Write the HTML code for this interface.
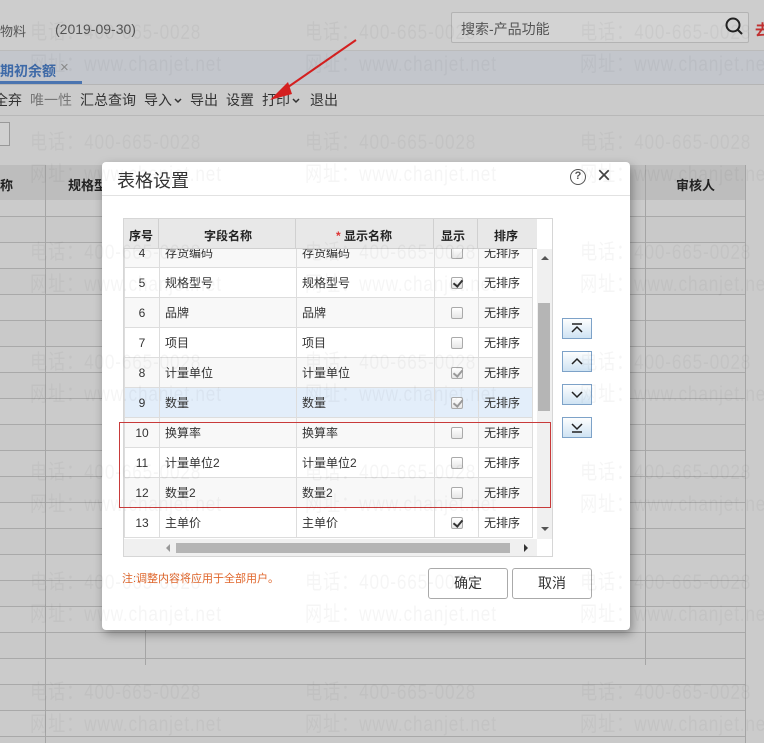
<!DOCTYPE html>
<html><head><meta charset="utf-8">
<style>
*{margin:0;padding:0;box-sizing:border-box}
body{width:764px;height:743px;overflow:hidden;position:relative;background:#cbcbcb;font-family:"Liberation Sans","Noto Sans CJK SC",sans-serif;font-size:13px;color:#222}
.a{position:absolute}
.t{white-space:nowrap}
.wm{position:absolute;font-family:"Liberation Sans","Noto Sans CJK SC",sans-serif;font-size:21px;color:rgba(0,0,0,0.04);white-space:nowrap;transform:scaleX(0.82);transform-origin:left top;letter-spacing:1px;pointer-events:none}
table.in{border-collapse:collapse;position:absolute;left:0;top:0}
table.in td{height:30px;border:1px solid #ddd;font-size:12px;color:#333}
.cb{display:inline-block;width:12px;height:12px;border:1px solid #aaa;border-radius:2px;background:linear-gradient(#fff,#e6e6e6);position:relative;vertical-align:middle}
.cb.on:after{content:"";position:absolute;left:3px;top:0px;width:4px;height:7px;border:solid #333;border-width:0 2px 2px 0;transform:rotate(40deg)}
.cb.dim.on:after{border-color:#999}
.sb{position:absolute;left:562px;width:30px;height:21px;border:1px solid #7da2c8;background:linear-gradient(#fdfefe,#cfe3f3);}
.btn{position:absolute;top:568px;width:80px;height:31px;border:1px solid #aaa;border-radius:3px;background:#fff;text-align:center;line-height:29px;font-size:14px;color:#333}
.chev{display:inline-block;vertical-align:middle;margin-left:2px}
</style></head><body>
<div class="a" style="left:0;top:0;width:764px;height:50px;background:#cdcdcd"></div>
<div class="a t" style="left:0;top:21px;font-size:13px;color:#555">物料</div>
<div class="a t" style="left:55px;top:21px;font-size:14px;color:#555">(2019-09-30)</div>
<div class="a" style="left:451px;top:12px;width:298px;height:31px;border:1px solid #b3b3b3;background:#d3d3d3;border-radius:2px"></div>
<div class="a t" style="left:461px;top:19px;font-size:14px;color:#555">搜索-产品功能</div>
<svg class="a" style="left:724px;top:16px" width="22" height="22"><circle cx="9" cy="9" r="6.5" fill="none" stroke="#222" stroke-width="2"/><line x1="14" y1="14" x2="18" y2="18" stroke="#222" stroke-width="2"/></svg>
<div class="a t" style="left:755px;top:19px;font-size:15px;color:#c03030;font-weight:bold">去</div>
<div class="a" style="left:0;top:50px;width:764px;height:35px;background:#c3c6cc;border-top:1px solid #bbb;border-bottom:1px solid #b5b5b5"></div>
<div class="a t" style="left:0;top:61px;font-size:14px;color:#3e6aa8;font-weight:bold">期初余额</div>
<div class="a t" style="left:60px;top:59px;font-size:15px;color:#888">×</div>
<div class="a" style="left:0;top:81px;width:82px;height:3px;background:#4a74b0"></div>
<div class="a t" style="left:-6px;top:90px;font-size:14px;color:#333">
<span>全弃</span><span style="color:#777;margin-left:8px">唯一性</span><span style="margin-left:8px">汇总查询</span><span style="margin-left:8px">导入</span><svg class="chev" width="8" height="6"><polyline points="1,1 4,4 7,1" fill="none" stroke="#333" stroke-width="1.5"/></svg><span style="margin-left:8px">导出</span><span style="margin-left:8px">设置</span><span style="margin-left:8px">打印</span><svg class="chev" width="8" height="6"><polyline points="1,1 4,4 7,1" fill="none" stroke="#333" stroke-width="1.5"/></svg><span style="margin-left:10px">退出</span></div>
<div class="a" style="left:0;top:115px;width:764px;height:1px;background:#b8b8b8"></div>
<div class="a" style="left:-4px;top:122px;width:14px;height:24px;border:1px solid #999;background:#d0d0d0"></div>
<div class="a" style="left:0;top:165px;width:745px;height:35px;background:#bdbdbd"></div>
<div class="a t" style="left:0;top:175px;font-weight:bold;font-size:13px">称</div>
<div class="a t" style="left:68px;top:175px;font-weight:bold;font-size:13px">规格型</div>
<div class="a t" style="left:676px;top:175px;font-weight:bold;font-size:13px">审核人</div>
<div class="a" style="left:0;top:200px;width:745px;height:543px;background:repeating-linear-gradient(#cbcbcb 0,#cbcbcb 16px,#a9a9a9 16px,#a9a9a9 17px,#c9c9c9 17px,#c9c9c9 42px,#a9a9a9 42px,#a9a9a9 43px,#cbcbcb 43px,#cbcbcb 52px);"></div>
<div class="a" style="left:45px;top:165px;width:1px;height:578px;background:#a5a5a5"></div>
<div class="a" style="left:145px;top:165px;width:1px;height:500px;background:#a5a5a5"></div>
<div class="a" style="left:645px;top:165px;width:1px;height:500px;background:#a5a5a5"></div>
<div class="a" style="left:745px;top:165px;width:1px;height:578px;background:#a5a5a5"></div>
<div class="a" style="left:746px;top:165px;width:18px;height:578px;background:#cbcbcb"></div>
<svg class="a" style="left:260px;top:38px" width="100" height="70"><line x1="96" y1="2" x2="18" y2="56" stroke="#d42020" stroke-width="2"/><polygon points="10,62 28,44 32,56" fill="#d42020"/></svg>
<div class="a" style="left:102px;top:162px;width:528px;height:468px;background:#fff;border-radius:4px;box-shadow:2px 4px 10px rgba(0,0,0,0.35)"></div>
<div class="a t" style="left:117px;top:167px;font-size:18px;color:#333">表格设置</div>
<div class="a" style="left:570px;top:169px;width:16px;height:16px;border:1.5px solid #555;border-radius:50%;font-size:11px;text-align:center;line-height:13px;color:#555;font-weight:bold">?</div>
<div class="a t" style="left:597px;top:162px;font-size:24px;color:#444">×</div>
<div class="a" style="left:102px;top:195px;width:528px;height:1px;background:#e2e2e2"></div>
<div class="a" style="left:123px;top:218px;width:430px;height:339px;border:1px solid #d6d6d6;overflow:hidden;background:#fff">
 <div class="a" style="left:0;top:18px;width:413px">
 <table class="in" style="top:0"><tbody id="rows"></tbody></table>
 </div>
 <div class="a" style="left:0;top:0;width:413px;height:30px;background:#e8e8e8;border-bottom:1px solid #d0d0d0"></div>
 <div class="a t" style="left:5px;top:8px;font-weight:bold;font-size:12px">序号</div>
 <div class="a t" style="left:80px;top:8px;font-weight:bold;font-size:12px">字段名称</div>
 <div class="a t" style="left:212px;top:8px;font-weight:bold;font-size:12px"><span style="color:#d33">*</span> 显示名称</div>
 <div class="a t" style="left:317px;top:8px;font-weight:bold;font-size:12px">显示</div>
 <div class="a t" style="left:370px;top:8px;font-weight:bold;font-size:12px">排序</div>
 <div class="a" style="left:34px;top:0;width:1px;height:30px;background:#d0d0d0"></div>
 <div class="a" style="left:171px;top:0;width:1px;height:30px;background:#d0d0d0"></div>
 <div class="a" style="left:309px;top:0;width:1px;height:30px;background:#d0d0d0"></div>
 <div class="a" style="left:353px;top:0;width:1px;height:30px;background:#d0d0d0"></div>
 <div class="a" style="left:413px;top:30px;width:15px;height:290px;background:#f0f0f0"></div>
 <div class="a" style="left:414px;top:84px;width:12px;height:108px;background:#b5b5b5"></div>
 <div class="a" style="left:417px;top:37px;width:0;height:0;border:4px solid transparent;border-bottom-color:#555;border-top:0"></div>
 <div class="a" style="left:417px;top:308px;width:0;height:0;border:4px solid transparent;border-top-color:#555;border-bottom:0"></div>
 <div class="a" style="left:0;top:320px;width:413px;height:18px;background:#f0f0f0"></div>
 <div class="a" style="left:52px;top:324px;width:334px;height:10px;background:#b5b5b5"></div>
 <div class="a" style="left:42px;top:325px;width:0;height:0;border:4px solid transparent;border-right-color:#999;border-left:0"></div>
 <div class="a" style="left:400px;top:325px;width:0;height:0;border:4px solid transparent;border-left-color:#333;border-right:0"></div>
</div>
<div class="a" style="left:119px;top:422px;width:432px;height:86px;border:1px solid #c83a3a"></div>
<div class="sb" style="top:318px"><svg width="28" height="19"><line x1="9" y1="5" x2="19" y2="5" stroke="#222" stroke-width="1.5"/><polyline points="9,13 14,8 19,13" fill="none" stroke="#222" stroke-width="1.5"/></svg></div>
<div class="sb" style="top:351px"><svg width="28" height="19"><polyline points="9,12 14,7 19,12" fill="none" stroke="#222" stroke-width="1.5"/></svg></div>
<div class="sb" style="top:384px"><svg width="28" height="19"><polyline points="9,7 14,12 19,7" fill="none" stroke="#222" stroke-width="1.5"/></svg></div>
<div class="sb" style="top:417px"><svg width="28" height="19"><polyline points="9,6 14,11 19,6" fill="none" stroke="#222" stroke-width="1.5"/><line x1="9" y1="14" x2="19" y2="14" stroke="#222" stroke-width="1.5"/></svg></div>
<div class="a t" style="left:122px;top:570px;font-size:11px;color:#e0662b">注:调整内容将应用于全部用户。</div>
<div class="btn" style="left:428px">确定</div>
<div class="btn" style="left:512px">取消</div>
<div id="wm"></div>
<script>
var d=[["4","存货编码",0],["5","规格型号",2],["6","品牌",0],["7","项目",0],["8","计量单位",3],["9","数量",3],["10","换算率",0],["11","计量单位2",0],["12","数量2",0],["13","主单价",2]];
var h="";d.forEach(function(r,i){var bg=r[0]=="9"?"#e3eefa":(i%2?"#fff":"#f8f8f8");var c=r[2]==0?'<span class="cb"></span>':(r[2]==2?'<span class="cb on"></span>':'<span class="cb on dim"></span>');
h+='<tr style="background:'+bg+'"><td style="width:35px;text-align:center">'+r[0]+'</td><td style="width:137px;padding-left:5px">'+r[1]+'</td><td style="width:138px;padding-left:5px">'+r[1]+'</td><td style="width:44px;text-align:center">'+c+'</td><td style="width:54px;padding-left:5px">无排序</td></tr>';});
document.getElementById("rows").innerHTML=h;
var w="";for(var y=0;y<7;y++){for(var x=0;x<3;x++){var L=30+x*275,T=16+y*110;w+='<div class="wm" style="left:'+L+'px;top:'+T+'px">电话：400-665-0028</div><div class="wm" style="left:'+L+'px;top:'+(T+32)+'px">网址：www.chanjet.net</div>';}}
document.getElementById("wm").innerHTML=w;
</script>
</body></html>
